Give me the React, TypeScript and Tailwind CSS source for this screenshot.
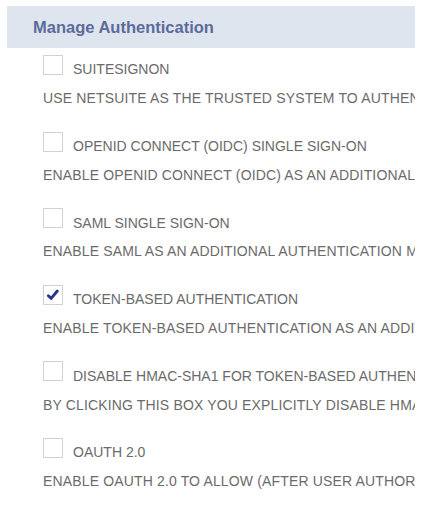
const options = [
  {
    id: "ssn",
    label: "SuiteSignOn",
    help: "Use NetSuite as the trusted system to authenticate users before they access external applications",
    checked: false,
  },
  {
    id: "oidc",
    label: "OpenID Connect (OIDC) Single Sign-On",
    help: "Enable OpenID Connect (OIDC) as an additional authentication method for your account",
    checked: false,
  },
  {
    id: "saml",
    label: "SAML Single Sign-On",
    help: "Enable SAML as an additional authentication method for your account",
    checked: false,
  },
  {
    id: "tba",
    label: "Token-based Authentication",
    help: "Enable token-based authentication as an additional authentication method",
    checked: true,
  },
  {
    id: "hmac",
    label: "Disable HMAC-SHA1 for Token-based Authentication",
    help: "By clicking this box you explicitly disable HMAC-SHA1 for token-based authentication",
    checked: false,
  },
  {
    id: "oauth2",
    label: "OAuth 2.0",
    help: "Enable OAuth 2.0 to allow (after user authorization) applications to access NetSuite",
    checked: false,
  },
];

const CheckBox: React.FC<{ checked: boolean }> = ({ checked }) => {
  return (
    <span className="flex h-5 w-5 shrink-0 items-center justify-center border border-[#d2d2d2] bg-white">
      {checked && (
        <svg viewBox="0 0 20 20" className="h-5 w-5">
          <path
            d="M4.8 10.8 L8 13.8 L14.8 5.6"
            fill="none"
            stroke="#25378a"
            strokeWidth="3.2"
            strokeLinecap="round"
            strokeLinejoin="round"
          />
        </svg>
      )}
    </span>
  );
};

export default function App() {
  return (
    <div className="min-h-[521px] w-full bg-white pt-[6px] font-['Liberation_Sans',Arial,sans-serif]">
      <div className="ml-[7px] w-[408px] overflow-hidden">
        <div className="flex h-[42px] items-center bg-[#dfe5ef] pl-[26px]">
          <h1 className="text-[16.5px] font-bold text-[#5b6b9b]">Manage Authentication</h1>
        </div>
        <div className="flex flex-col gap-[25.3px] pl-[36px] pt-[7px]">
          {options.map((opt) => (
            <div key={opt.id} className="flex flex-col">
              <label className="flex h-5 items-start gap-[10px]">
                <CheckBox checked={opt.checked} />
                <span className="mt-[4.4px] whitespace-nowrap text-[14px] uppercase leading-[20px] text-[#6b6b6b]">
                  {opt.label}
                </span>
              </label>
              <p className="mt-[15.3px] whitespace-nowrap text-[14px] uppercase leading-[16px] tracking-[0.15px] text-[#6b6b6b]">
                {opt.help}
              </p>
            </div>
          ))}
        </div>
      </div>
    </div>
  );
}
